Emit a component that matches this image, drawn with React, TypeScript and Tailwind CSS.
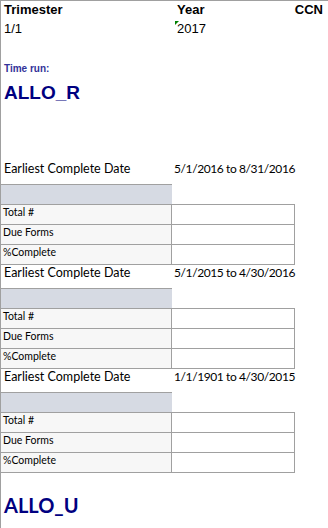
const sections = [
  { range: "5/1/2016 to 8/31/2016" },
  { range: "5/1/2015 to 4/30/2016" },
  { range: "1/1/1901 to 4/30/2015" },
];

const rows = ["Total #", "Due Forms", "%Complete"];

function Section({ range }: { range: string }) {
  return (
    <div>
      {/* heading row */}
      <div className="flex h-[23px] text-[12.5px] leading-[16px] text-black">
        <div className="w-[171px] pl-[3px]">Earliest Complete Date</div>
        <div className="pl-[2px] text-[12px] tracking-[-0.4px]">{range}</div>
      </div>
      {/* shaded band */}
      <div className="h-[20px] w-[171px] border-t border-[#a0a0a0] bg-[#d6dae3]" />
      {/* data table */}
      <div className="w-[294px] border-t border-r border-[#a0a0a0]">
        {rows.map((r) => (
          <div key={r} className="flex h-[20px] border-b border-[#a0a0a0]">
            <div className="w-[171px] border-r border-[#a0a0a0] bg-[#f7f7f7] pl-[2px] pt-[1px] text-[10.5px] leading-[12px] text-black">
              {r}
            </div>
            <div className="flex-1 bg-white" />
          </div>
        ))}
      </div>
    </div>
  );
}

export default function App() {
  return (
    <div className="h-[528px] w-[328px] overflow-hidden border-l border-t border-[#a0a0a0] bg-white font-['Lato',sans-serif]">
      {/* Header */}
      <div className="pt-[1px] font-['Liberation_Sans',Arial,sans-serif] text-[13px] leading-[15px] text-black">
        <div className="grid grid-cols-[173px_1fr_auto] pr-[5px] pl-[3px]">
          <span className="font-bold">Trimester</span>
          <span className="font-bold">Year</span>
          <span className="font-bold">CCN</span>
        </div>
        <div className="mt-[4px] grid grid-cols-[173px_1fr] pl-[3px]">
          <span>1/1</span>
          <span className="relative">
            <svg className="absolute top-0 -left-[2px]" width="4" height="4" viewBox="0 0 4 4">
              <polygon points="0,0 4,0 0,4" fill="#008000" />
            </svg>
            2017
          </span>
        </div>
      </div>

      <div className="mt-[27px] pl-[3px] font-['Liberation_Sans',Arial,sans-serif] text-[10px] leading-[12px] font-bold text-[#333399]">
        Time run:
      </div>
      <div className="mt-[7px] pl-[3px] font-['Liberation_Sans',Arial,sans-serif] text-[19px] leading-[22px] font-bold text-[#000080]">
        ALLO_R
      </div>

      <div className="mt-[57px]">
        {sections.map((s) => (
          <Section key={s.range} range={s.range} />
        ))}
      </div>

      <div className="mt-[20px] pl-[3px] text-[20px] leading-[24px] font-bold text-[#000080]">
        ALLO_U
      </div>
    </div>
  );
}
